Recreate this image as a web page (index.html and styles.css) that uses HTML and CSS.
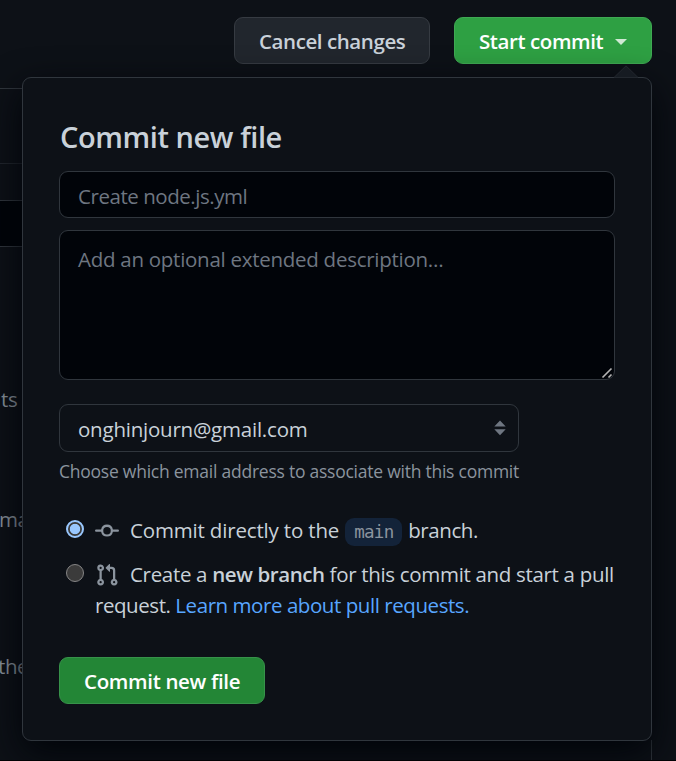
FILE: index.html
```html
<!DOCTYPE html>
<html lang="en">
<head>
<meta charset="utf-8">
<title>Commit new file</title>
<link rel="stylesheet" href="styles.css">
</head>
<body>
<div class="page">
  <header class="actions">
    <button class="btn cancel"><span>Cancel changes</span></button>
    <button class="btn start"><span>Start commit</span><i class="caret"></i></button>
  </header>
  <main class="backdrop">
    <div class="strip tabs"></div>
    <div class="strip search-row"></div>
    <div class="strip search"></div>
    <p class="line one">ts</p>
    <p class="line two">ma</p>
    <p class="line three">the</p>
  </main>
  <div class="edge"></div>
  <section class="popover">
    <h1><span>Commit new file</span></h1>
    <div class="field summary"><span>Create node.js.yml</span></div>
    <div class="field description"><span>Add an optional extended description…</span>
      <svg class="grip" width="12" height="12" viewBox="0 0 12 12"><path d="M1.5 10.5 10.5 1.5M7.5 10.5l3-3" stroke="#b5b5b5" stroke-width="1.6"/></svg>
    </div>
    <div class="select"><span>onghinjourn@gmail.com</span>
      <svg width="12" height="16" viewBox="0 0 12 16" fill="#6e7681"><path d="M6 .5 11.7 6.5H.3zM.3 9.2h11.4L6 15.2z"/></svg>
    </div>
    <p class="note">Choose which email address to associate with this commit</p>
    <div class="choice direct">
      <i class="radio checked"></i>
      <div class="label"><svg width="24" height="24" viewBox="0 0 16 16" fill="#8b949e"><path fill-rule="evenodd" d="M10.5 7.75a2.5 2.5 0 11-5 0 2.5 2.5 0 015 0zm1.43.75a4.002 4.002 0 01-7.86 0H.75a.75.75 0 110-1.5h3.32a4.001 4.001 0 017.86 0h3.32a.75.75 0 110 1.5h-3.32z"/></svg><span class="directly">Commit directly to the</span><code>main</code><span class="branch">branch.</span></div>
    </div>
    <div class="choice pull">
      <i class="radio"></i>
      <div>
        <div class="label"><svg width="24" height="24" viewBox="0 0 16 16" fill="#8b949e"><path fill-rule="evenodd" d="M7.177 3.073L9.573.677A.25.25 0 0110 .854v4.792a.25.25 0 01-.427.177L7.177 3.427a.25.25 0 010-.354zM3.75 2.5a.75.75 0 100 1.5.75.75 0 000-1.5zm-2.25.75a2.25 2.25 0 113 2.122v5.256a2.251 2.251 0 11-1.5 0V5.372A2.25 2.25 0 011.5 3.25zM11 2.5h-1V4h1a1 1 0 011 1v5.628a2.251 2.251 0 101.5 0V5A2.5 2.5 0 0011 2.5zm1 10.25a.75.75 0 111.5 0 .75.75 0 01-1.5 0zM3.75 12a.75.75 0 100 1.5.75.75 0 000-1.5z"/></svg><span class="create">Create a <b>new branch</b> for this commit and start a pull</span></div>
        <div class="label second"><span>request. <a>Learn more about pull requests.</a></span></div>
      </div>
    </div>
    <button class="btn submit"><span>Commit new file</span></button>
  </section>
  <svg class="pointer" width="26" height="13" viewBox="0 0 26 13"><path d="M1 12.5 13 .8 25 12.5" fill="#161b22" stroke="#23282f"/></svg>
</div>
</body>
</html>
```
FILE: styles.css
```css
* { box-sizing: border-box; }
body { margin: 0; background: #0d1117; }
.page {
  position: relative; width: 676px; height: 761px; overflow: hidden;
  font: 20.5px/31px "Open Sans", "Noto Sans", sans-serif; color: #c9d1d9;
  letter-spacing: -0.4px; white-space: nowrap;
  border-bottom: 1px solid #010104;
}
h1, p { margin: 0; }
.actions { display: flex; justify-content: flex-end; gap: 24px; padding: 17px 24px 0 0; height: 88px; }
.btn {
  display: flex; align-items: center; height: 47px; padding: 2px 0 0 24px; border-radius: 9px;
  font: 600 20.5px/31px "Open Sans", "Noto Sans", sans-serif; letter-spacing: -0.42px;
  border: 1px solid #363b42; white-space: nowrap;
}
.cancel { width: 196px; background: #21262d; color: #c9d1d9; }
.start { width: 198px; background: #2ea043; border-color: #3fa953; color: #fff; }
.caret { margin-left: 12px; border: 6px solid transparent; border-top-color: #cfe9d4; border-bottom: 0; }
.backdrop { width: 23px; overflow: hidden; color: #8b949e; }
.strip { border-top: 1px solid #30363d; }
.tabs { height: 75px; }
.search-row { height: 37px; border-color: #21262d; }
.search { height: 47px; background: #010409; border-bottom: 1px solid #30363d; }
.line { height: 31px; }
.one { margin: 137px 0 0 1px; }
.two { margin: 89px 0 0 -1px; }
.three { margin: 116px 0 0 -2px; }
.edge { position: absolute; left: 651px; top: 740px; width: 1px; height: 20px; background: #30363d; }
.popover {
  position: absolute; left: 22px; top: 77px; width: 630px; height: 664px; padding: 36px 36px 0;
  background: #0d1117; border: 1px solid #30363d; border-radius: 9px;
  box-shadow: 0 12px 36px #010409;
}
.pointer { position: absolute; left: 613px; top: 65px; }
h1 { font-size: 29px; line-height: 46px; font-weight: 600; letter-spacing: -0.42px; padding-left: 1px; margin-bottom: 11px; }
.field { position: relative; width: 556px; background: #010409; border: 1px solid #30363d; border-radius: 9px; color: #6e7681; padding: 9px 18px 0; }
.summary { height: 47px; margin-bottom: 12px; letter-spacing: -0.45px; }
.description { height: 150px; padding-top: 13px; margin-bottom: 24px; letter-spacing: -0.27px; }
.grip { position: absolute; right: 1px; bottom: 0; }
.select { display: flex; align-items: center; justify-content: space-between; width: 460px; height: 48px; padding: 0 12px 0 18px; border: 1px solid #30363d; border-radius: 9px; letter-spacing: -0.22px; }
.select span { padding-top: 2px; }
.note { font-size: 17.5px; line-height: 27px; color: #8b949e; letter-spacing: -0.24px; margin: 6px 0 30px; }
.choice { display: flex; padding-left: 7px; }
.radio { width: 18px; height: 18px; margin: 5px 11px 0 0; border: 1px solid #858585; border-radius: 50%; background: #3b3b3b; flex: none; }
.checked { border: 2px solid #99c8ff; background: radial-gradient(circle, #99c8ff 0 4.8px, #3b3b3b 5.6px); }
.label { display: flex; align-items: center; height: 31px; }
.label svg { margin-right: 11px; flex: none; }
.directly { letter-spacing: -0.17px; }
.create { letter-spacing: -0.32px; }
.second { letter-spacing: -0.44px; }
.direct { margin-bottom: 13px; }
code { font: 17.5px/28px "DejaVu Sans Mono", monospace; letter-spacing: -0.7px; color: #8b949e; background: #132339; border-radius: 9px; height: 28px; width: 57px; padding-left: 9px; margin: 2px 6px 0 6px; }
b { font-weight: 600; letter-spacing: -0.42px; }
a { color: #58a6ff; }
.submit { width: 206px; margin-top: 36px; background: #238636; border-color: #37924a; color: #fff; letter-spacing: -0.34px; }
```
